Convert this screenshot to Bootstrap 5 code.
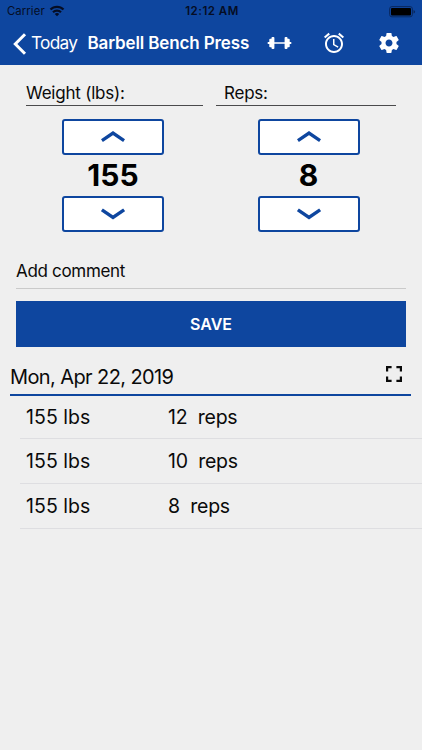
<!DOCTYPE html>
<html lang="en">
<head>
<meta charset="utf-8">
<meta name="viewport" content="width=device-width, initial-scale=1">
<title>Barbell Bench Press</title>
<link href="https://cdn.jsdelivr.net/npm/bootstrap@5.3.0/dist/css/bootstrap.min.css" rel="stylesheet">
<style>
:root { --brand: #0e469f; }
body { font-family: Inter, "Liberation Sans", sans-serif; background: #efefef; color: #0a0a0a; min-height: 750px; overflow: hidden; line-height: 1.2; }
svg { display: block; flex: none; }
.app-header { background: var(--brand); height: 65.4px; }
.status-line { height: 22px; padding: 1px 6px 0 8px; font-size: 11px; color: #050d24; }
.status-line > * { flex: 1 1 0; }
.carrier { font-size: 11.3px; letter-spacing: .1px; margin-left: -1px; }
.status-time { font-weight: 600; font-size: 11.5px; letter-spacing: .5px; }
.title-line { height: 43px; padding-left: 13px; color: #fff; }
.back-link { font-size: 17.3px; width: 74.5px; letter-spacing: -.75px; }
.page-title { font-size: 17px; font-weight: 600; letter-spacing: -.13px; width: 179.5px; }
.dumbbell { margin-bottom: 1px; }
.alarm { margin-left: 30px; margin-bottom: 1px; }
.gear { margin-left: 31px; margin-bottom: 2px; }
.entry { padding: 13.6px 16px 0; }
.field-label { height: 27px; line-height: 28px; border-bottom: 1.4px solid #4a4a4c; font-size: 17px; letter-spacing: -.22px; margin-bottom: 13px; }
.label-weight { margin-left: 10px; width: 177px; }
.label-reps { margin-left: 5px; width: 180px; padding-left: 8px; }
.steps-weight { margin-right: 1px; }
.step-btn { width: 102px; height: 36px; border: 2px solid var(--brand); border-radius: 3px; background: #fff; padding: 0; }
.amount { font-size: 30px; font-weight: 700; height: 41px; line-height: 41px; color: #000; letter-spacing: 0; }
.comment-field { margin: 22px 16px 12px; height: 35px; line-height: 35px; border-bottom: 1.5px solid #cacaca; font-size: 17px; letter-spacing: -.32px; }
.save-btn { margin: 0 16px; height: 46px; width: 390px; background: var(--brand); color: #fff; border: 0; border-radius: 0; font-size: 16px; font-weight: 600; padding-top: 2px; }
.day-head { margin: 0 11px 0 10px; height: 49px; border-bottom: 2px solid var(--brand); padding: 18px 9px 0 0; }
.day-text { font-size: 20px; letter-spacing: -.6px; }
.fullscreen { margin-top: 1px; }
.set-row { margin-left: 20px; height: 44.7px; border-bottom: 1px solid #dedee1; padding: 1px 0 0 6px; font-size: 19.5px; }
.set-row-first { height: 43.4px; }
.set-weight { width: 142px; letter-spacing: .05px; }
.set-reps { white-space: pre; letter-spacing: -.25px; }
</style>
</head>
<body>
<header class="app-header">
  <div class="status-line d-flex align-items-center">
    <div class="d-flex align-items-center"><span class="carrier">Carrier</span>
      <svg class="ms-1" width="16" height="12" viewBox="0 0 16 12" fill="none" stroke="#050d24" stroke-width="2.2"><path d="M1.5 4.6C5 .9 11 .9 14.5 4.6M4 7.2C6.2 5 9.8 5 12 7.2"/><path d="M5.8 8.9C7 7.8 9 7.8 10.2 8.9L8 11.2z" fill="#050d24" stroke="none"/></svg>
    </div>
    <div class="status-time text-center">12:12 AM</div>
    <div class="d-flex justify-content-end"><svg width="27" height="12" viewBox="0 0 27 12"><rect x=".6" y=".6" width="22.8" height="10.2" rx="2.3" fill="none" stroke="#09285f"/><rect x="2" y="2" width="20" height="7.4" rx="1" fill="#000"/><path d="M24.5 4v3.6q1.6-.4 1.6-1.8t-1.6-1.8z" fill="#09285f"/></svg></div>
  </div>
  <div class="title-line d-flex align-items-center">
    <a class="back-link d-flex align-items-center text-white text-decoration-none" href="#">
      <svg width="18" height="22" viewBox="0 0 18 22" fill="none" stroke="#fff" stroke-width="3"><path d="M12 1.2L2.3 11L12 20.8"/></svg>Today</a>
    <h1 class="page-title text-nowrap mb-0">Barbell Bench Press</h1>
    <svg class="dumbbell" width="25" height="14" viewBox="0 0 25 14" fill="#fff"><path d="M.7 6h1.6V3.5q0-.8.8-.8h1.4V2q0-.9.9-.9h1.1q.9 0 .9.9v4.2h10.2V2q0-.9.9-.9h1.1q.9 0 .9.9v.7h1.4q.8 0 .8.8V6h1.6v2h-1.6v2.5q0 .8-.8.8h-1.4v.7q0 .9-.9.9h-1.1q-.9 0-.9-.9V7.8H7.4V12q0 .9-.9.9H5.4q-.9 0-.9-.9v-.7H3.1q-.8 0-.8-.8V8H.7z"/></svg>
    <svg class="alarm" width="24" height="24" viewBox="0 0 24 24" fill="#fff"><path d="M22 5.72l-4.6-3.86-1.29 1.53 4.6 3.86L22 5.72zM7.88 3.39L6.6 1.86 2 5.71l1.29 1.53 4.59-3.85zM12.5 8H11v6l4.75 2.85.75-1.23-4-2.37V8zM12 4c-4.97 0-9 4.03-9 9s4.02 9 9 9c4.97 0 9-4.03 9-9s-4.03-9-9-9zm0 16c-3.87 0-7-3.13-7-7s3.13-7 7-7 7 3.13 7 7-3.13 7-7 7z"/></svg>
    <svg class="gear" width="24" height="24" viewBox="0 0 24 24" fill="#fff"><path d="M19.43 12.98c.04-.32.07-.64.07-.98s-.03-.66-.07-.98l2.11-1.65c.19-.15.24-.42.12-.64l-2-3.46c-.12-.22-.39-.3-.61-.22l-2.49 1c-.52-.4-1.08-.73-1.69-.98l-.38-2.65C14.46 2.18 14.25 2 14 2h-4c-.25 0-.46.18-.49.42l-.38 2.65c-.61.25-1.17.59-1.69.98l-2.49-1c-.23-.09-.49 0-.61.22l-2 3.46c-.13.22-.07.49.12.64l2.11 1.65c-.04.32-.07.65-.07.98s.03.66.07.98l-2.11 1.65c-.19.15-.24.42-.12.64l2 3.46c.12.22.39.3.61.22l2.49-1c.52.4 1.08.73 1.69.98l.38 2.65c.03.24.24.42.49.42h4c.25 0 .46-.18.49-.42l.38-2.65c.61-.25 1.17-.59 1.69-.98l2.49 1c.23.09.49 0 .61-.22l2-3.46c.12-.22.07-.49-.12-.64l-2.11-1.65zM12 15.5c-1.93 0-3.5-1.57-3.5-3.5s1.57-3.5 3.5-3.5 3.5 1.57 3.5 3.5-1.57 3.5-3.5 3.5z"/></svg>
  </div>
</header>
<main>
  <section class="entry row g-0">
    <div class="col-6">
      <div class="field-label label-weight">Weight (lbs):</div>
      <div class="steps-weight d-flex flex-column align-items-center">
        <button class="step-btn d-flex align-items-center justify-content-center" aria-label="Increase weight"><svg width="24" height="14" viewBox="0 0 24 14" fill="none" stroke="#0e469f" stroke-width="3.4"><path d="M.9 10.6L12 3L23.1 10.6"/></svg></button>
        <div class="amount">155</div>
        <button class="step-btn d-flex align-items-center justify-content-center" aria-label="Decrease weight"><svg width="24" height="14" viewBox="0 0 24 14" fill="none" stroke="#0e469f" stroke-width="3.4"><path d="M.9 2.8L12 10.4L23.1 2.8"/></svg></button>
      </div>
    </div>
    <div class="col-6">
      <div class="field-label label-reps">Reps:</div>
      <div class="d-flex flex-column align-items-center">
        <button class="step-btn d-flex align-items-center justify-content-center" aria-label="Increase reps"><svg width="24" height="14" viewBox="0 0 24 14" fill="none" stroke="#0e469f" stroke-width="3.4"><path d="M.9 10.6L12 3L23.1 10.6"/></svg></button>
        <div class="amount">8</div>
        <button class="step-btn d-flex align-items-center justify-content-center" aria-label="Decrease reps"><svg width="24" height="14" viewBox="0 0 24 14" fill="none" stroke="#0e469f" stroke-width="3.4"><path d="M.9 2.8L12 10.4L23.1 2.8"/></svg></button>
      </div>
    </div>
  </section>
  <div class="comment-field">Add comment</div>
  <button class="save-btn d-block">SAVE</button>
  <div class="day-head d-flex justify-content-between align-items-start">
    <div class="day-text">Mon, Apr 22, 2019</div>
    <svg class="fullscreen" width="16" height="16" viewBox="0 0 16 16" fill="none" stroke="#0a0a0a" stroke-width="2.2"><path d="M1.1 5.6V1.1H5.6M10.4 1.1h4.5v4.5M14.9 10.4v4.5h-4.5M5.6 14.9H1.1v-4.5"/></svg>
  </div>
  <div class="set-row set-row-first d-flex align-items-center"><span class="set-weight">155 lbs</span><span class="set-reps">12  reps</span></div>
  <div class="set-row d-flex align-items-center"><span class="set-weight">155 lbs</span><span class="set-reps">10  reps</span></div>
  <div class="set-row d-flex align-items-center"><span class="set-weight">155 lbs</span><span class="set-reps">8  reps</span></div>
</main>
<script src="https://cdn.jsdelivr.net/npm/bootstrap@5.3.0/dist/js/bootstrap.bundle.min.js"></script>
</body>
</html>
